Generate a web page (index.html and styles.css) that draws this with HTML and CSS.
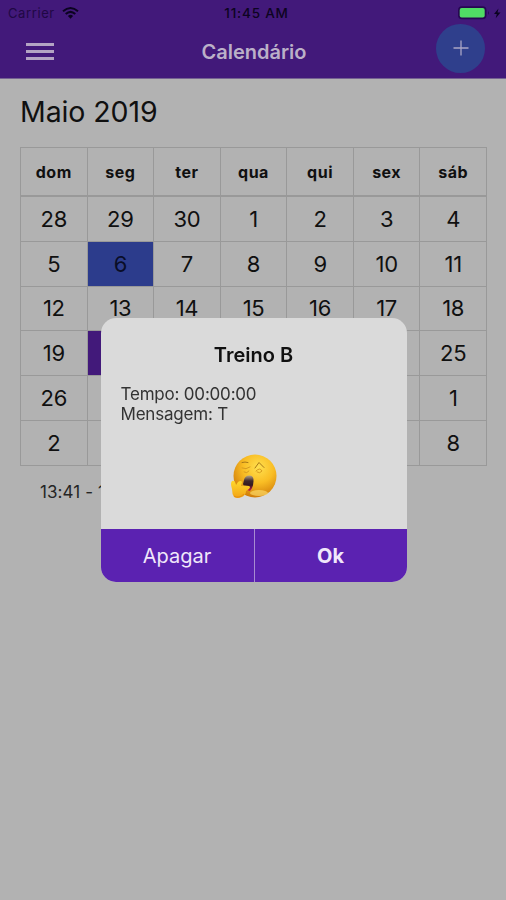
FILE: index.html
```html
<!DOCTYPE html>
<html lang="pt">
<head>
<meta charset="utf-8">
<title>Calendário</title>
<link rel="stylesheet" href="styles.css">
</head>
<body>
<header class="header">
  <div class="status">
    <div class="carrier"><span>Carrier</span>
      <svg class="wifi" width="17" height="12" viewBox="0 0 17 12" fill="none" stroke="#0b0320" stroke-width="2"><path d="M1 4.3Q8.5-2.2 16 4.3M3.7 7.1Q8.500 2.700 13.300 7.100"/><path d="M5.900 8.900Q8.500 6.700 11.100 8.900L8.500 11.700Z" fill="#0b0320" stroke="none"/></svg>
    </div>
    <div class="clock">11:45 AM</div>
    <svg class="battery" width="44" height="16" viewBox="0 0 44 16"><rect x="0" y="1.300" width="28.500" height="13" rx="4" fill="#260852"/><rect x="1.700" y="3" width="25" height="9.500" rx="2" fill="#50dc65"/><path d="M30 5.500q1.800 2.300 0 4.600z" fill="#260852"/><path d="M40.500 3.500L36 9h2.800L37.700 13.200 42.500 7.600H39.500z" fill="#0b0320"/></svg>
  </div>
  <nav class="nav">
    <div class="menu"><i></i><i></i><i></i></div>
    <h1 class="title">Calendário</h1>
    <div class="add"><svg width="16" height="16" viewBox="0 0 16 16" stroke="#aaa6c5" stroke-width="1.300"><path d="M8 .5v15M.5 8h15"/></svg></div>
  </nav>
</header>
<main class="page">
  <h2 class="month">Maio 2019</h2>
  <div class="calendar">
    <div class="row head"><b>dom</b><b>seg</b><b>ter</b><b>qua</b><b>qui</b><b>sex</b><b>sáb</b></div>
    <div class="row"><span>28</span><span>29</span><span>30</span><span>1</span><span>2</span><span>3</span><span>4</span></div>
    <div class="row"><span>5</span><span class="today">6</span><span>7</span><span>8</span><span>9</span><span>10</span><span>11</span></div>
    <div class="row"><span>12</span><span>13</span><span>14</span><span>15</span><span>16</span><span>17</span><span>18</span></div>
    <div class="row"><span>19</span><span class="selected"></span><span></span><span></span><span></span><span></span><span>25</span></div>
    <div class="row"><span>26</span><span></span><span></span><span></span><span></span><span></span><span>1</span></div>
    <div class="row"><span>2</span><span></span><span></span><span></span><span></span><span></span><span>8</span></div>
  </div>
  <p class="event">13:41 - 1</p>
</main>
<div class="overlay">
  <section class="dialog">
    <div class="body">
      <h3 class="dialog-title">Treino B</h3>
      <p class="info">Tempo: 00:00:00<br>Mensagem: T</p>
      <svg class="emoji" width="48" height="48" viewBox="0 0 48 48">
        <defs>
          <radialGradient id="face" cx=".58" cy=".3" r=".72"><stop offset="0" stop-color="#ffe04f"/><stop offset=".5" stop-color="#f9bd24"/><stop offset="1" stop-color="#cf7a08"/></radialGradient>
          <linearGradient id="hand" x2="0" y2="1"><stop offset="0" stop-color="#ffd82c"/><stop offset="1" stop-color="#f2a315"/></linearGradient>
          <linearGradient id="mouth" x2="0" y2="1"><stop offset="0" stop-color="#b5a68a"/><stop offset=".35" stop-color="#40282c"/><stop offset=".62" stop-color="#351a20"/><stop offset="1" stop-color="#d31a52"/></linearGradient>
        </defs>
        <circle cx="25" cy="22" r="21.500" fill="url(#face)"/>
        <ellipse cx="29" cy="39" rx="9" ry="3" fill="#ffe374" opacity=".6"/>
        <g fill="none" stroke="#a87818" stroke-width="1" stroke-linecap="round"><path d="M12 8.500q3-1 6 0M25 14l4-5.500 5 5"/><path d="M12 14q4 2 8-1M14 18q3 2 5-1M26 17q4-4 6 0-2 3-5 1" stroke="#d79b20"/></g>
        <path d="M14 26q1-5 6-4.500 4 .5 3.500 6Q23 34 20 37q-5-1-7-7z" fill="url(#mouth)"/>
        <path d="M2 27q3-1 4 4l2-3q3-2 4 0l-1 4q3-1 8 0 2 1 0 3l-3 2q0 4-4 6-5 2-8 0-2-3-2-8Q0 29 2 27z" fill="url(#hand)"/>
        <path d="M4 42q5 3 10-2" fill="none" stroke="#e48e12"/>
      </svg>
    </div>
    <div class="actions"><button class="button">Apagar</button><button class="button ok">Ok</button></div>
  </section>
</div>
</body>
</html>
```

FILE: styles.css
```css
* { box-sizing: border-box; }
body { margin: 0; min-height: 900px; background: #b2b2b2; color: #101010; font-family: Inter, "Liberation Sans", sans-serif; }
h1, h2, h3, p { margin: 0; font-weight: 400; }
.header { height: 79px; background: #42197a; border-bottom: 1px solid #756292; }
.status { height: 26px; display: grid; grid-template-columns: 1fr auto 1fr; align-items: center; padding: 0 4px 0 8px; color: #0d0421; font-size: 13px; }
.carrier { display: flex; align-items: center; gap: 7px; letter-spacing: .6px; color: #200844; }
.clock { font-weight: 500; font-size: 13.500px; letter-spacing: .8px; margin-left: 3px; }
.battery { justify-self: end; }
.nav { height: 52px; display: grid; grid-template-columns: 60px 1fr 60px; align-items: center; padding: 0 16px 0 20px; }
.menu { width: 34px; display: flex; flex-direction: column; gap: 4px; padding-left: 6px; margin-top: -1px; }
.menu i { height: 3px; background: #b3a4c4; }
.title { margin-left: -2px; text-align: center; font-size: 20px; font-weight: 600; color: #bbb0c8; }
.add { width: 49px; height: 49px; margin: -8px 0 0 6px; border-radius: 50%; background: #2f3f8c; display: flex; align-items: center; justify-content: center; }
.page { padding: 15px 19px 0 20px; }
.month { font-size: 28.500px; line-height: 36px; letter-spacing: -.1px; }
.calendar { margin-top: 17px; border: solid #999; border-width: 1px 0 0 1px; }
.row { display: grid; grid-template-columns: repeat(7, 1fr); height: 44.800px; font-size: 22px; letter-spacing: -.3px; }
.row > * { display: flex; align-items: center; justify-content: center; border: solid #999; border-width: 0 1px 1px 0; }
.head { height: 49px; font-size: 16px; }
.head > b { border-bottom-width: 2px; font-weight: 700; letter-spacing: .5px; }
.row > .today { background: #2c3c8c; color: #090d27; }
.row > .selected { background: #42197a; }
.event { margin: 16px 0 0 20px; font-size: 17px; line-height: 20px; letter-spacing: .1px; color: #252525; white-space: nowrap; }
.overlay { position: fixed; inset: 0; display: flex; align-items: center; justify-content: center; padding-left: 1px; }
.dialog { width: 306px; height: 264px; display: flex; flex-direction: column; border-radius: 15px; overflow: hidden; background: #dadada; }
.body { flex: 1; display: flex; flex-direction: column; padding: 24px 20px 0; }
.dialog-title { text-align: center; font-size: 20px; line-height: 26px; font-weight: 600; }
.info { margin-top: 17px; font-size: 17px; line-height: 19.500px; letter-spacing: -.2px; color: #333; }
.emoji { align-self: center; margin-top: 30px; }
.actions { height: 53px; display: grid; grid-template-columns: 1fr 1fr; background: #5b22b1; }
.button { border: 0; background: none; color: #f0e7fa; font: 400 20px Inter, sans-serif; }
.ok { border-left: 1px solid #a78bd1; font-weight: 700; }
```
